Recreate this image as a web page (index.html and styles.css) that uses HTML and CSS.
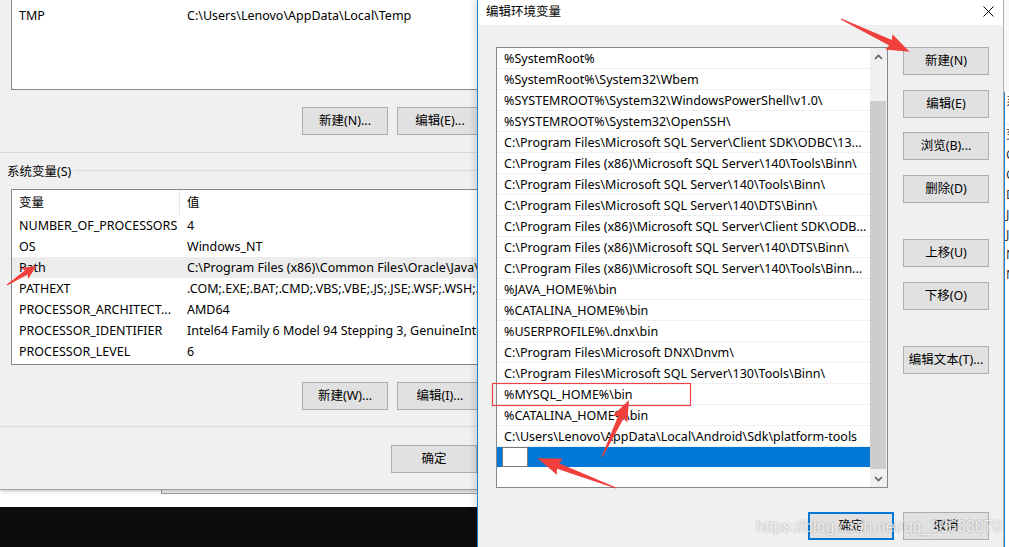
FILE: index.html
```html
<!DOCTYPE html>
<html lang="zh-CN">
<head>
    <meta charset="UTF-8">
    <meta name="viewport" content="width=device-width, initial-scale=1.0">
    <title>编辑环境变量</title>
    <link rel="stylesheet" href="styles.css">
</head>
<body>
<div class="screen">
    <div class="left-pane">
        <div class="env-dialog">
            <div class="var-list user-list">
                <div class="var-row"><span class="var-name">TMP</span><span class="var-value">C:\Users\Lenovo\AppData\Local\Temp</span></div>
            </div>
            <div class="btn-row">
                <button class="btn">新建(N)...</button>
                <button class="btn">编辑(E)...</button>
            </div>
            <div class="sep"></div>
            <div class="group-title"><span>系统变量(S)</span></div>
            <div class="var-list sys-list">
                <div class="var-row var-head"><span class="var-name">变量</span><span class="var-value">值</span></div>
                <div class="var-row"><span class="var-name">NUMBER_OF_PROCESSORS</span><span class="var-value">4</span></div>
                <div class="var-row"><span class="var-name">OS</span><span class="var-value">Windows_NT</span></div>
                <div class="var-row hover"><span class="var-name">Path</span><span class="var-value">C:\Program Files (x86)\Common Files\Oracle\Java\javapath;C:\Windows</span></div>
                <div class="var-row"><span class="var-name">PATHEXT</span><span class="var-value">.COM;.EXE;.BAT;.CMD;.VBS;.VBE;.JS;.JSE;.WSF;.WSH;.MSC</span></div>
                <div class="var-row"><span class="var-name">PROCESSOR_ARCHITECT...</span><span class="var-value">AMD64</span></div>
                <div class="var-row"><span class="var-name">PROCESSOR_IDENTIFIER</span><span class="var-value">Intel64 Family 6 Model 94 Stepping 3, GenuineIntel</span></div>
                <div class="var-row"><span class="var-name">PROCESSOR_LEVEL</span><span class="var-value">6</span></div>
            </div>
            <div class="btn-row">
                <button class="btn">新建(W)...</button>
                <button class="btn">编辑(I)...</button>
            </div>
            <div class="sep"></div>
            <div class="btn-row ok-row">
                <button class="btn">确定</button>
            </div>
        </div>
        <div class="under"><div class="back-edge"></div></div>
        <div class="console"></div>
    </div>

    <div class="edit-dialog">
        <div class="title-bar">
            <span>编辑环境变量</span>
            <svg class="close" width="11" height="11" viewBox="0 0 11 11"><path d="M0.5 0.5L10.5 10.5M10.5 0.5L0.5 10.5" stroke="#000" stroke-width="1"/></svg>
        </div>
        <div class="dialog-body">
            <div class="path-box">
                <div class="path-rows">
                    <div class="path-row">%SystemRoot%</div>
                    <div class="path-row">%SystemRoot%\System32\Wbem</div>
                    <div class="path-row">%SYSTEMROOT%\System32\WindowsPowerShell\v1.0\</div>
                    <div class="path-row">%SYSTEMROOT%\System32\OpenSSH\</div>
                    <div class="path-row">C:\Program Files\Microsoft SQL Server\Client SDK\ODBC\13...</div>
                    <div class="path-row">C:\Program Files (x86)\Microsoft SQL Server\140\Tools\Binn\</div>
                    <div class="path-row">C:\Program Files\Microsoft SQL Server\140\Tools\Binn\</div>
                    <div class="path-row">C:\Program Files\Microsoft SQL Server\140\DTS\Binn\</div>
                    <div class="path-row">C:\Program Files (x86)\Microsoft SQL Server\Client SDK\ODB...</div>
                    <div class="path-row">C:\Program Files (x86)\Microsoft SQL Server\140\DTS\Binn\</div>
                    <div class="path-row">C:\Program Files (x86)\Microsoft SQL Server\140\Tools\Binn...</div>
                    <div class="path-row">%JAVA_HOME%\bin</div>
                    <div class="path-row">%CATALINA_HOME%\bin</div>
                    <div class="path-row">%USERPROFILE%\.dnx\bin</div>
                    <div class="path-row">C:\Program Files\Microsoft DNX\Dnvm\</div>
                    <div class="path-row">C:\Program Files\Microsoft SQL Server\130\Tools\Binn\</div>
                    <div class="path-row">%MYSQL_HOME%\bin</div>
                    <div class="path-row">%CATALINA_HOME%\bin</div>
                    <div class="path-row">C:\Users\Lenovo\AppData\Local\Android\Sdk\platform-tools</div>
                    <div class="path-row selected"><span class="edit-box"></span></div>
                </div>
                <div class="scrollbar">
                    <div class="sb-arrow"><svg width="9" height="6" viewBox="0 0 9 6"><path d="M1 5L4.5 1.5L8 5" fill="none" stroke="#606060" stroke-width="1.6"/></svg></div>
                    <div class="sb-track"><div class="sb-thumb"></div></div>
                    <div class="sb-arrow"><svg width="9" height="6" viewBox="0 0 9 6"><path d="M1 1L4.5 4.5L8 1" fill="none" stroke="#606060" stroke-width="1.6"/></svg></div>
                </div>
            </div>
            <div class="side-buttons">
                <button class="btn">新建(N)</button>
                <button class="btn">编辑(E)</button>
                <button class="btn">浏览(B)...</button>
                <button class="btn">删除(D)</button>
                <button class="btn spaced">上移(U)</button>
                <button class="btn">下移(O)</button>
                <button class="btn spaced">编辑文本(T)...</button>
            </div>
            <div class="footer">
                <button class="btn default">确定</button>
                <button class="btn">取消</button>
            </div>
        </div>
    </div>

    <div class="edge-strip">
        <div class="edge-top"></div>
        <div class="edge-win">
            <div>系</div>
            <div class="edge-sep">变</div>
            <div>C</div>
            <div>C</div>
            <div>D</div>
            <div>J</div>
            <div>J</div>
            <div>N</div>
            <div>N</div>
        </div>
    </div>

    <!-- red annotation marks drawn over the screenshot -->
    <svg class="marks" width="1009" height="547" viewBox="0 0 1009 547">
        <g fill="#f0403c">
            <polygon transform="translate(841 19) rotate(25.6)" points="0,-0.5 55,-3 53,-8.5 76,0 53,8.5 55,3 0,0.5"/>
            <polygon transform="translate(7 285) rotate(-33)" points="0,-0.5 23,-2.5 21,-6.5 35,0 21,6.5 23,2.5 0,0.5"/>
            <polygon transform="translate(602 457) rotate(-64.6)" points="0,-0.5 44,-3 42,-8 63,0 42,8 44,3 0,0.5"/>
            <polygon transform="translate(616 488) rotate(-159.2)" points="0,-0.5 62,-3 60,-8.5 84,0 60,8.5 62,3 0,0.5"/>
        </g>
        <rect x="492.5" y="383.5" width="198" height="22" fill="none" stroke="#ec4347" stroke-width="1.2"/>
    </svg>
    <div class="watermark">https://blog.csdn.net/qq_38633070</div>
</div>
</body>
</html>
```

FILE: styles.css
```css
* {
    box-sizing: border-box;
}
body {
    margin: 0;
    overflow: hidden;
    background: #f0f0f0;
    font-family: "Noto Sans", "Noto Sans CJK SC", sans-serif;
    font-size: 12.5px;
    color: #000;
}
.screen {
    position: relative;
    width: 1009px;
    height: 547px;
    display: flex;
    overflow: hidden;
}
.btn {
    width: 86px;
    height: 28px;
    padding: 0 0 3px;
    background: #e1e1e1;
    border: 1px solid #adadad;
    font: inherit;
    color: #000;
    flex: none;
}

/* left: environment variables dialog (behind) */
.left-pane {
    width: 477px;
    flex: none;
    display: flex;
    flex-direction: column;
    overflow: hidden;
}
.env-dialog {
    height: 490px;
    flex: none;
    padding-left: 11px;
    background: #f0f0f0;
    border-bottom: 1px solid #a0a0a0;
    box-shadow: 0 1px 4px rgba(0,0,0,0.25);
    position: relative;
    z-index: 1;
}
.var-list {
    width: 480px;
    background: #fff;
    border: 1px solid #828790;
    border-right: none;
}
.user-list {
    height: 90px;
    border-top: none;
    padding-top: 5px;
}
.sys-list {
    height: 176px;
    margin-top: 8px;
}
.var-row {
    display: grid;
    grid-template-columns: 168px 1fr;
    height: 21px;
    line-height: 21px;
    white-space: nowrap;
}
.var-row span {
    overflow: hidden;
    padding-left: 7px;
}
.var-head {
    height: 25px;
    line-height: 25px;
}
.var-head .var-name {
    border-right: 1px solid #e5e5e5;
}
.var-row.hover {
    background: #ececec;
}
.btn-row {
    display: flex;
    gap: 9px;
    margin-top: 17px;
    padding-left: 291px;
}
.ok-row {
    margin-top: 18px;
    padding-left: 380px;
}
.sep {
    height: 1px;
    margin: 16px 0 0 -11px;
    background: #dadada;
}
.user-list + .btn-row + .sep {
    margin-top: 17px;
}
.group-title {
    display: flex;
    align-items: center;
    height: 20px;
    margin: 8px 0 0 -4px;
    padding-bottom: 1px;
}
.group-title::after {
    content: "";
    flex: 1;
    height: 1px;
    margin-left: 3px;
    background: #dadada;
}
.under {
    height: 17px;
    flex: none;
    background: #fff;
}
.back-edge {
    height: 4px;
    margin-left: 161px;
    background: #f0f0f0;
    border-left: 1px solid #a0a0a0;
    border-bottom: 1px solid #a0a0a0;
}
.console {
    flex: 1;
    background: #0c0c0c;
}

/* right: edit dialog */
.edit-dialog {
    width: 526px;
    flex: none;
    display: flex;
    flex-direction: column;
    border-left: 1px solid #1883d7;
    background: #f0f0f0;
    box-shadow: -3px 0 6px rgba(0,0,0,0.12);
    position: relative;
    z-index: 2;
}
.title-bar {
    height: 25px;
    flex: none;
    background: #fff;
    display: flex;
    align-items: center;
    justify-content: space-between;
    padding: 0 9px 5px 8px;
}
.title-bar .close {
    margin-top: 2px;
}
.dialog-body {
    display: grid;
    grid-template-columns: 392px 86px;
    grid-template-rows: 441px auto;
    column-gap: 15px;
    padding: 22px 0 0 18px;
}
.path-box {
    display: flex;
    background: #fff;
    border: 1px solid #828790;
}
.path-rows {
    flex: 1;
    min-width: 0;
}
.path-row {
    height: 21px;
    line-height: 22px;
    padding-left: 7px;
    border-bottom: 1px solid #f0f0f0;
    white-space: nowrap;
    overflow: hidden;
}
.path-row.selected {
    display: flex;
    padding-left: 5px;
    background: #0078d7;
    border-bottom-color: #fff;
}
.edit-box {
    width: 26px;
    height: 20px;
    background: #fff;
    border: 1px solid #7a7a7a;
}
.scrollbar {
    width: 17px;
    display: flex;
    flex-direction: column;
    background: #f0f0f0;
}
.sb-arrow {
    height: 17px;
    display: flex;
    align-items: center;
    justify-content: center;
}
.sb-track {
    flex: 1;
    display: flex;
    flex-direction: column;
    padding: 36px 1px 1px 0;
}
.sb-thumb {
    flex: 1;
    background: #cdcdcd;
}
.side-buttons {
    display: flex;
    flex-direction: column;
    gap: 14.67px;
}
.side-buttons .spaced {
    margin-top: 21.33px;
}
.footer {
    grid-column: 1 / 3;
    display: flex;
    justify-content: flex-end;
    gap: 9px;
    margin-top: 24px;
}
.btn.default {
    border: 2px solid #0078d7;
}

/* sliver of another window on the far right */
.edge-strip {
    width: 6px;
    flex: none;
    display: flex;
    flex-direction: column;
    border-left: 1px solid #b4b4b4;
    background: #f8f8f8;
    overflow: hidden;
}
.edge-top {
    height: 92px;
    flex: none;
}
.edge-win {
    flex: 1;
    background: #fff;
    border-left: 1px solid #1883d7;
    line-height: 20px;
    white-space: nowrap;
    padding-left: 1px;
    color: #333;
}
.edge-sep {
    border-top: 1px solid #e0e0e0;
    margin-top: 12px;
}

/* annotations */
.marks {
    position: absolute;
    top: 0;
    left: 0;
    pointer-events: none;
    z-index: 5;
}
.watermark {
    position: absolute;
    left: 756px;
    top: 518px;
    z-index: 6;
    font-family: "Liberation Sans", sans-serif;
    font-size: 16px;
    color: rgba(255,255,255,0.78);
    text-shadow: 0 0 2px rgba(0,0,0,0.35);
    white-space: nowrap;
}
```
